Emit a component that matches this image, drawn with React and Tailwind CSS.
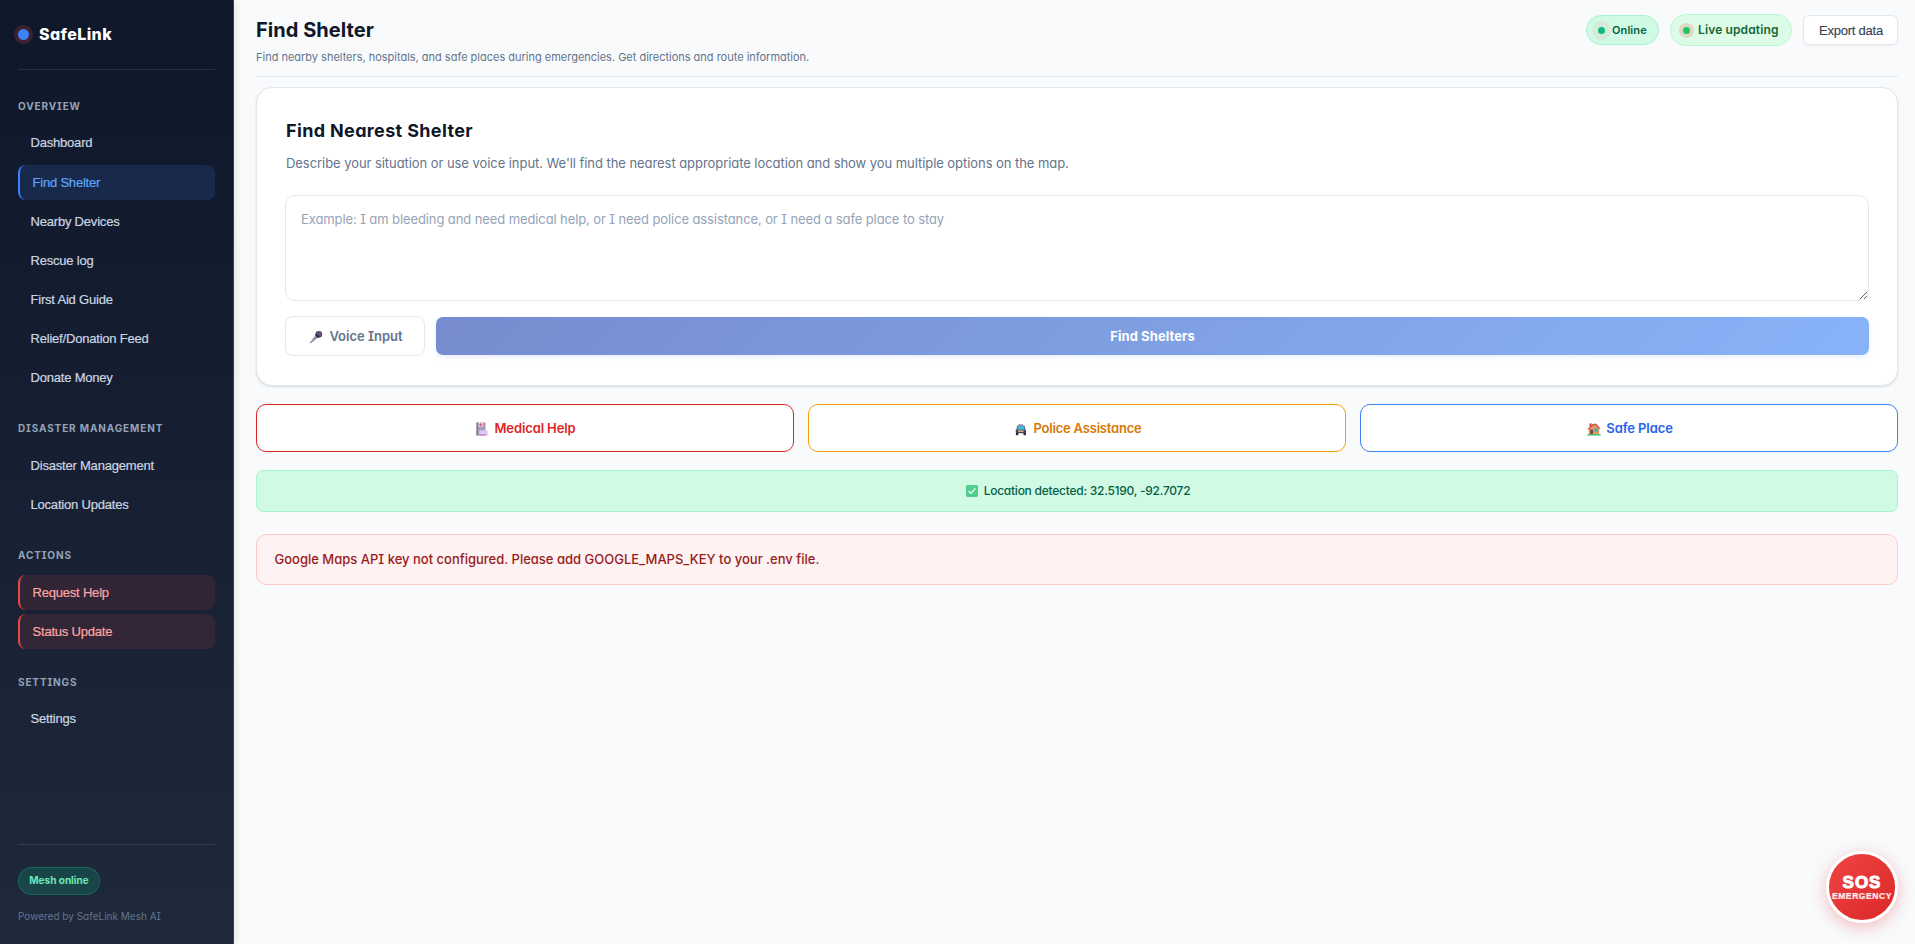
import React, { useState } from "react";

const navSections = [
  {
    title: "Overview",
    items: [
      { label: "Dashboard" },
      { label: "Find Shelter", active: true },
      { label: "Nearby Devices" },
      { label: "Rescue log" },
      { label: "First Aid Guide" },
      { label: "Relief/Donation Feed" },
      { label: "Donate Money" },
    ],
  },
  {
    title: "Disaster Management",
    items: [{ label: "Disaster Management" }, { label: "Location Updates" }],
  },
  {
    title: "Actions",
    items: [
      { label: "Request Help", danger: true },
      { label: "Status Update", danger: true },
    ],
  },
  {
    title: "Settings",
    items: [{ label: "Settings" }],
  },
];

const MicIcon = () => (
  <svg width="14" height="14" viewBox="0 0 14 14">
    <path d="M1 12.2 6.6 5.2 8.9 7.4 2 13.2 0.9 13.2Z" fill="#8f8798" />
    <path d="M1.4 12.6 7.6 6.2" stroke="#b9b3c0" strokeWidth="0.8" />
    <circle cx="9.8" cy="4.3" r="3.4" fill="#4a3a5c" />
    <path d="M7.8 2.6 12 6M9.4 1.4 12.8 4.2" stroke="#8d7fa0" strokeWidth="0.8" />
    <path d="M6.6 4.6 9.5 7.4" stroke="#2e2440" strokeWidth="1.1" />
  </svg>
);

const HospitalIcon = () => (
  <svg width="12" height="14" viewBox="0 0 12 14">
    <rect x="0.5" y="0.5" width="9" height="13" fill="#a79db3" />
    <rect x="0.5" y="0.5" width="1.6" height="13" fill="#857a94" />
    <rect x="2.6" y="1" width="4.2" height="3.8" fill="#f3dcee" />
    <path d="M4.7 1.2v3.2M3.1 2.8h3.2" stroke="#e0418c" strokeWidth="1" />
    <rect x="3.2" y="8.4" width="8.3" height="4.2" fill="#dccbf5" />
    <path d="M3.2 13h8.3" stroke="#e05cd0" strokeWidth="1" strokeDasharray="3 0.6" />
  </svg>
);

const PoliceIcon = () => (
  <svg width="12" height="13" viewBox="0 0 12 13">
    <rect x="3.6" y="1" width="2.2" height="1.5" fill="#e8788c" />
    <rect x="5.8" y="1" width="2.2" height="1.5" fill="#9aa6e6" />
    <path d="M2.4 2.6h7l1.2 4H1.2Z" fill="#4b5a78" />
    <path d="M2.9 3.2h6l0.9 3.3H2Z" fill="#35c3e8" />
    <rect x="0.8" y="6.4" width="10.2" height="3.8" rx="0.8" fill="#4a4256" />
    <rect x="3.2" y="7.2" width="5.4" height="1.8" fill="#b7a98e" />
    <rect x="0.9" y="9.8" width="2.4" height="2.4" fill="#2d2438" />
    <rect x="8.5" y="9.8" width="2.4" height="2.4" fill="#2d2438" />
  </svg>
);

const HouseIcon = () => (
  <svg width="14" height="14" viewBox="0 0 14 14">
    <rect x="2.6" y="1.4" width="2" height="4" fill="#b5483a" />
    <path d="M1.8 6.6 7.4 2.4 12.2 6.6V12.6H1.8Z" fill="#dc9a62" />
    <path d="M0.5 7.2 5.6 2 9 1.4 13.4 6.6 12.4 7.2 8 3 5 4.4 1.6 8Z" fill="#cf5a45" />
    <rect x="3.2" y="7.6" width="2.8" height="5" fill="#7b4a3c" />
    <rect x="7.6" y="6.6" width="3" height="3" fill="#35a7dc" />
    <rect x="0.4" y="12.2" width="13.2" height="1.4" fill="#3fb868" />
  </svg>
);

const CheckIcon = () => (
  <svg width="12" height="12" viewBox="0 0 12 12">
    <rect x="0.2" y="0.2" width="11.6" height="11.6" rx="1" fill="#3fae78" />
    <rect x="0.2" y="0.2" width="11" height="10.6" rx="1" fill="#52cf8e" />
    <path d="m2.6 6 2.3 2.4L9.4 3.4" fill="none" stroke="#f2fff8" strokeWidth="1.2" />
  </svg>
);

const NavItem = ({ item }) => {
  let style = "pt-[0.1px] text-[#cbd5e1]";
  if (item.active) style = "pt-px border-l-2 border-[#3b82f6] bg-[#3b82f6]/15 text-[#60a5fa]";
  if (item.danger) style = "pt-px border-l-2 border-[#ef4444] bg-[#ef4444]/[0.12] text-[#fca5a5]";

  return (
    <button
      className={`${style} flex items-center w-full h-[35.1px] mb-1 pl-[12.5px] rounded-lg text-left text-[13px] tracking-[-0.2px] font-['Liberation_Sans',sans-serif] [-webkit-text-stroke:0.2px]`}
    >
      {item.label}
    </button>
  );
};

const Sidebar = () => (
  <aside className="relative z-10 flex flex-col shrink-0 w-[234px] h-full px-[18px] bg-linear-to-b from-[#0f172a] to-[#1e293b] border-r border-[#334155] shadow-[2px_0_8px_rgba(0,0,0,0.08)]">
    <div className="flex items-center h-[70px] gap-[10px] border-b border-white/10 text-white">
      <span className="w-[11px] h-[11px] rounded-full bg-[#3b82f6] shadow-[0_0_0_4px_rgba(239,68,68,0.2)]" />
      <span className="pb-px text-base font-extrabold tracking-[0.4px]">SafeLink</span>
    </div>

    <nav className="pt-[6.95px]">
      {navSections.map((section) => (
        <div key={section.title}>
          <h4 className="flex items-end h-[48.6px] pb-[11.3px] text-[10px] leading-[15px] font-bold uppercase tracking-[0.87px] text-[#94a3b8]">
            {section.title}
          </h4>
          {section.items.map((item) => (
            <NavItem key={item.label} item={item} />
          ))}
        </div>
      ))}
    </nav>

    <div className="flex flex-col items-start mt-auto h-[100px] pt-[22px] border-t border-white/10">
      <span className="flex items-center justify-center w-[82px] h-7 pb-px rounded-full border border-[#10b981]/30 bg-[#10b981]/20 text-[10px] font-bold text-[#6ee7b7]">
        Mesh online
      </span>
      <p className="mt-[14px] text-[10px] leading-[15px] text-[#64748b]">Powered by SafeLink Mesh AI</p>
    </div>
  </aside>
);

const Header = () => (
  <header className="flex justify-between h-[77px] border-b border-[#e2e8f0]">
    <div className="pt-[15px]">
      <h1 className="text-xl leading-[30px] font-bold tracking-[0.05px] text-[#0f172a]">Find Shelter</h1>
      <p className="mt-1 text-[11px] leading-4 tracking-[-0.01px] text-[#64748b]">
        Find nearby shelters, hospitals, and safe places during emergencies. Get directions and route information.
      </p>
    </div>

    <div className="flex items-center h-8 mt-3.5 gap-[11px]">
      <span className="flex items-center w-[73px] h-[30px] pl-[11px] gap-[7px] rounded-full border border-[#a7f3d0] bg-[#d1fae5] text-[11px] font-semibold tracking-[0.1px] text-[#065f46]">
        <i className="w-[7px] h-[7px] rounded-full bg-[#10b981] shadow-[0_0_0_6px_rgba(239,68,68,0.08)]" />
        Online
      </span>
      <span className="flex items-center w-[122px] h-8 pl-3 gap-2 rounded-full border border-[#bbf7d0] bg-[#dcfce7] text-xs font-semibold tracking-[0.13px] text-[#166534]">
        <i className="w-[7px] h-[7px] rounded-full bg-[#22c55e] shadow-[0_0_0_4px_rgba(239,68,68,0.2)]" />
        Live updating
      </span>
      <button className="w-[95px] h-[30px] pt-px pl-px rounded-md border border-[#e2e8f0] bg-white text-[13px] tracking-[-0.24px] text-[#334155] shadow-[0_1px_2px_rgba(0,0,0,0.05)] font-['Liberation_Sans',sans-serif] [-webkit-text-stroke:0.1px]">
        Export data
      </button>
    </div>
  </header>
);

const App = () => {
  const [message, setMessage] = useState("");

  return (
    <div className="relative flex w-full h-screen overflow-hidden bg-[#f8fafc] font-['Inter',sans-serif] [font-feature-settings:'cv11','cv08']">
      <Sidebar />

      <main className="flex-1 pl-[22px] pr-[17px]">
        <Header />

        <section className="mt-2.5 h-[299px] px-7 pt-7 rounded-2xl border border-[#e2e8f0] bg-white shadow-[0_1px_3px_rgba(0,0,0,0.08),0_1px_2px_rgba(0,0,0,0.06)]">
          <h2 className="pl-px text-lg leading-[30px] font-bold tracking-[0.35px] text-[#0f172a]">Find Nearest Shelter</h2>
          <p className="mt-[7px] pl-px text-[13px] leading-5 tracking-[-0.06px] text-[#64748b]">
            Describe your situation or use voice input. We'll find the nearest appropriate location and show you multiple
            options on the map.
          </p>

          <textarea
            value={message}
            onChange={(e) => setMessage(e.target.value)}
            placeholder="Example: I am bleeding and need medical help, or I need police assistance, or I need a safe place to stay"
            className="block w-full h-[106px] mt-[22px] px-[15px] py-[13px] rounded-[10px] border border-[#e2e8f0] bg-white text-[13px] leading-[21px] tracking-[-0.1px] placeholder:text-[#94a3b8] resize-y"
          />

          <div className="flex items-center gap-[11px] mt-[15px]">
            <button className="flex items-center justify-center w-[140px] h-10 pt-px pl-[2px] gap-[6px] rounded-lg border border-[#e2e8f0] bg-white text-[13px] font-semibold text-[#64748b]">
              <MicIcon />
              Voice Input
            </button>
            <button className="flex-1 h-[38px] pt-px rounded-[7px] bg-linear-135 from-[#1e40af] to-[#3b82f6] opacity-60 text-[13px] font-bold tracking-[0.08px] text-white shadow-[0_2px_4px_rgba(59,130,246,0.2)]">
              Find Shelters
            </button>
          </div>
        </section>

        <div className="grid grid-cols-3 gap-3.5 mt-[18px]">
          <button className="flex items-center justify-center h-12 pt-[2px] pl-[2px] gap-[6px] rounded-[10px] border border-[#dc2626] bg-white text-[13px] font-semibold tracking-[-0.12px] text-[#dc2626]">
            <HospitalIcon />
            Medical Help
          </button>
          <button className="flex items-center justify-center h-12 pt-[2px] pl-[3px] gap-[6px] rounded-[10px] border border-[#f59e0b] bg-white text-[13px] font-semibold tracking-[-0.2px] text-[#d97706]">
            <PoliceIcon />
            Police Assistance
          </button>
          <button className="flex items-center justify-center h-12 pt-[2px] pl-[2px] gap-[5px] rounded-[10px] border border-[#3b82f6] bg-white text-[13px] font-semibold tracking-[-0.1px] text-[#2563eb]">
            <HouseIcon />
            Safe Place
          </button>
        </div>

        <div className="flex items-center justify-center h-[42px] mt-[18px] pl-[2px] gap-[6px] rounded-[7px] border border-[#a7f3d0] bg-[#d1fae5] text-xs font-medium tracking-[-0.25px] text-[#065f46]">
          <CheckIcon />
          Location detected: 32.5190, -92.7072
        </div>

        <div className="flex items-center h-[51px] mt-[22px] px-[17.5px] rounded-[10px] border border-[#fecaca] bg-[#fef2f2] text-[13px] font-medium text-[#991b1b]">
          Google Maps API key not configured. Please add GOOGLE_MAPS_KEY to your .env file.
        </div>
      </main>

      <button className="absolute right-[17px] bottom-[21px] flex flex-col items-center justify-center w-[72px] h-[72px] rounded-full border-[3px] border-white bg-linear-135 from-[#ef4444] to-[#dc2626] text-white shadow-[0_4px_16px_rgba(239,68,68,0.35)] font-['Liberation_Sans',sans-serif]">
        <span className="text-[17px] leading-[17px] font-bold tracking-[1px] [-webkit-text-stroke:1px]">SOS</span>
        <span className="text-[8.5px] leading-[10px] font-bold tracking-[0.6px] text-white/90 [-webkit-text-stroke:0.2px]">EMERGENCY</span>
      </button>
    </div>
  );
};

export default App;
